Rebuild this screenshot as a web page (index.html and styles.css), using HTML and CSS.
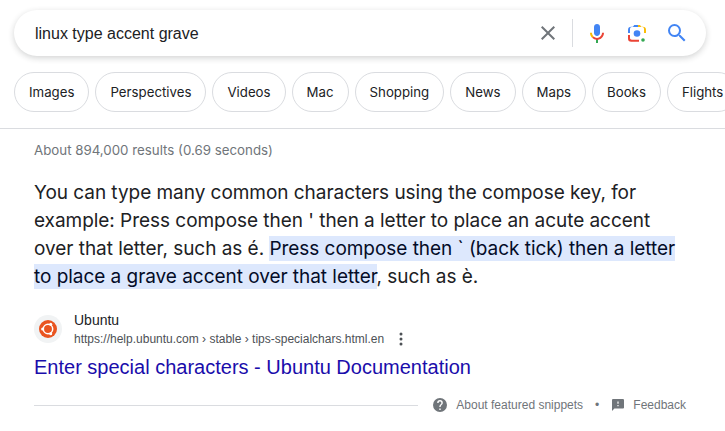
FILE: index.html
```html
<!DOCTYPE html>
<html lang="en">
<head>
<meta charset="utf-8">
<title>linux type accent grave</title>
<link rel="stylesheet" href="styles.css">
</head>
<body>
<header class="top">
  <div class="searchbox">
    <span class="query">linux type accent grave</span>
    <svg class="ic-x" width="24" height="24" viewBox="0 0 24 24"><path fill="#70757a" d="M19 6.41 17.59 5 12 10.59 6.41 5 5 6.41 10.59 12 5 17.59 6.41 19 12 13.41 17.59 19 19 17.59 13.41 12z"/></svg>
    <span class="divider"></span>
    <svg class="ic-mic" width="24" height="24" viewBox="0 0 24 24"><path fill="#4285f4" d="M12 15c1.66 0 3-1.31 3-2.97V5.97C15 4.31 13.66 3 12 3S9 4.31 9 5.97v6.06C9 13.69 10.34 15 12 15z"/><path fill="#34a853" d="M11 18.08h2V22h-2z"/><path fill="#fbbc04" d="M7.05 16.87c-1.27-1.33-2.05-3.1-2.05-5.02h2c0 1.4.56 2.67 1.47 3.6z"/><path fill="#ea4335" d="M12 16.93a5.1 5.1 0 0 1-3.53-1.48l-1.42 1.42A7 7 0 0 0 12 19c3.87 0 7-3.22 7-7.15h-2c0 2.8-2.24 5.08-5 5.08z"/></svg>
    <svg class="ic-lens" width="24" height="24" viewBox="0 0 24 24"><circle cx="12" cy="12.5" r="3.3" fill="#4285f4"/><circle cx="18" cy="19" r="1.8" fill="#34a853"/><path fill="#4285f4" d="M3 12V9A3.300 3.300 0 0 1 6.300 5.700H8L9.200 4h3.800v2H7a1.800 1.800 0 0 0-2 1.800V12z"/><path fill="#fbbc04" d="M13 4h2l1.200 1.700h1.500A3.300 3.300 0 0 1 21 9v3h-2V7.800A1.800 1.800 0 0 0 17 6h-4z"/><path fill="#ea4335" d="M3 14h2v3c0 1 .8 1.700 1.800 1.700H14v2H6.300A3.300 3.300 0 0 1 3 17.400z"/></svg>
    <svg class="ic-search" width="24" height="24" viewBox="0 0 24 24"><path fill="#4285f4" d="M15.500 14h-.79l-.28-.27A6.470 6.470 0 0 0 16 9.500 6.500 6.500 0 1 0 9.500 16c1.610 0 3.090-.59 4.230-1.570l.27.28v.79l5 4.990L20.490 19zm-6 0C7.010 14 5 11.990 5 9.500S7.010 5 9.500 5 14 7.010 14 9.500 11.990 14 9.500 14z"/></svg>
  </div>
  <nav class="chips">
    <span class="chip">Images</span>
    <span class="chip">Perspectives</span>
    <span class="chip">Videos</span>
    <span class="chip">Mac</span>
    <span class="chip">Shopping</span>
    <span class="chip">News</span>
    <span class="chip">Maps</span>
    <span class="chip">Books</span>
    <span class="chip">Flights</span>
  </nav>
</header>
<main class="content">
  <p class="stats">About 894,000 results (0.69 seconds)</p>
  <p class="snippet">You can type many common characters using the compose key, for example: Press compose then ' then a letter to place an acute accent over that letter, such as é. <mark class="hl">Press compose then ` (back tick) then a letter to place a grave accent over that letter</mark>, such as è.</p>
  <div class="source">
    <span class="favicon">
      <svg width="18" height="18" viewBox="0 0 18 18"><circle cx="9" cy="9" r="9" fill="#e95420"/><circle cx="9" cy="9" r="4.700" fill="none" stroke="#fff" stroke-width="1.500"/><circle cx="3.600" cy="9" r="1.500" fill="#fff"/><circle cx="11.700" cy="4.300" r="1.500" fill="#fff"/><circle cx="11.700" cy="13.700" r="1.500" fill="#fff"/></svg>
    </span>
    <div class="source-text">
      <div class="site">Ubuntu</div>
      <div class="url"><span>https://help.ubuntu.com › stable › tips-specialchars.html.en</span>
        <svg class="kebab" width="4" height="14" viewBox="0 0 4 14"><circle cx="2" cy="2" r="1.500" fill="#4d5156"/><circle cx="2" cy="7" r="1.500" fill="#4d5156"/><circle cx="2" cy="12" r="1.500" fill="#4d5156"/></svg>
      </div>
    </div>
  </div>
  <a class="title" href="#">Enter special characters - Ubuntu Documentation</a>
  <div class="footer">
    <span class="rule"></span>
    <svg class="foot-help" width="14" height="14" viewBox="2 2 20 20"><path fill="#70757a" d="M12 2a10 10 0 1 0 0 20 10 10 0 0 0 0-20zm1 17h-2v-2h2zm2.070-7.750-.9.920C13.450 12.900 13 13.500 13 15h-2v-.5c0-1.100.45-2.100 1.170-2.830l1.240-1.260c.37-.36.590-.86.590-1.410a2 2 0 0 0-4 0H8a4 4 0 0 1 8 0c0 .88-.36 1.680-.93 2.250z"/></svg>
    <span class="foot-text">About featured snippets</span>
    <span class="dot">•</span>
    <svg class="foot-fb" width="12" height="12" viewBox="2 2 20 20"><path fill="#70757a" d="M20 2H4c-1.100 0-2 .9-2 2v18l4-4h14c1.100 0 2-.9 2-2V4c0-1.100-.9-2-2-2zm-7 12h-2v-2h2zm0-4h-2V6h2z"/></svg>
    <span class="foot-text">Feedback</span>
  </div>
</main>
</body>
</html>
```
FILE: styles.css
```css
* { box-sizing: border-box; }
html, body { margin: 0; height: 100%; }
body {
  width: 725px;
  height: 431px;
  overflow: hidden;
  background: #fff;
  font-family: "Liberation Sans", sans-serif;
  color: #202124;
}
.top {
  height: 129px;
  padding: 10px 0 0 14px;
  border-bottom: 1px solid #dadce0;
}
.searchbox {
  width: 692px;
  height: 46px;
  border-radius: 23px;
  background: #fff;
  box-shadow: 0 2px 6px rgba(32, 33, 36, 0.2);
  display: flex;
  align-items: center;
  padding: 0 17px 0 21px;
}
.query { flex: 1; font-size: 16px; padding-top: 2px; }
.ic-x { margin-right: 12px; }
.divider { width: 1px; height: 28px; background: #dadce0; margin-right: 12px; }
.ic-mic { margin-right: 16px; }
.ic-lens { margin-right: 16px; }
.chips {
  display: flex;
  gap: 6px;
  margin-top: 16px;
}
.chip {
  flex: none;
  height: 40px;
  padding: 0 14px;
  border: 1px solid #dadce0;
  border-radius: 20px;
  display: flex;
  align-items: center;
  font-family: Inter, sans-serif;
  font-size: 13.25px;
}
.content { padding: 0 0 0 34px; width: 686px; }
.stats {
  margin: 12px 0 0;
  font-family: Inter, sans-serif;
  font-size: 13.3px;
  line-height: 18px;
  color: #70757a;
}
.snippet {
  margin: 20px 0 0;
  font-family: Inter, sans-serif;
  font-size: 19px;
  letter-spacing: -0.04px;
  line-height: 28px;
  color: #202124;
  width: 660px;
}
.hl { background: #dde8fd; color: #040c28; padding: 1px 0; }
.source {
  display: flex;
  align-items: center;
  gap: 12px;
  margin-top: 19px;
}
.favicon {
  width: 28px;
  height: 28px;
  border-radius: 50%;
  background: #f1f3f4;
  display: flex;
  align-items: center;
  justify-content: center;
}
.site { font-size: 14px; line-height: 20px; }
.url { font-size: 12px; line-height: 18px; color: #4d5156; display: flex; align-items: center; gap: 15px; }
.title {
  display: block;
  margin-top: 6px;
  font-family: "Liberation Sans", sans-serif;
  font-size: 20px;
  line-height: 26px;
  color: #1a0dab;
  text-decoration: none;
}
.footer {
  display: flex;
  align-items: center;
  margin-top: 13px;
  height: 24px;
  font-size: 12px;
  color: #70757a;
}
.rule { flex: 1; height: 1px; background: #dadce0; margin-right: 15px; }
.foot-help { margin-right: 9px; }
.dot { margin: 0 13px 0 12px; }
.foot-fb { margin-right: 9px; }
.foot-text { line-height: 16px; }
```
